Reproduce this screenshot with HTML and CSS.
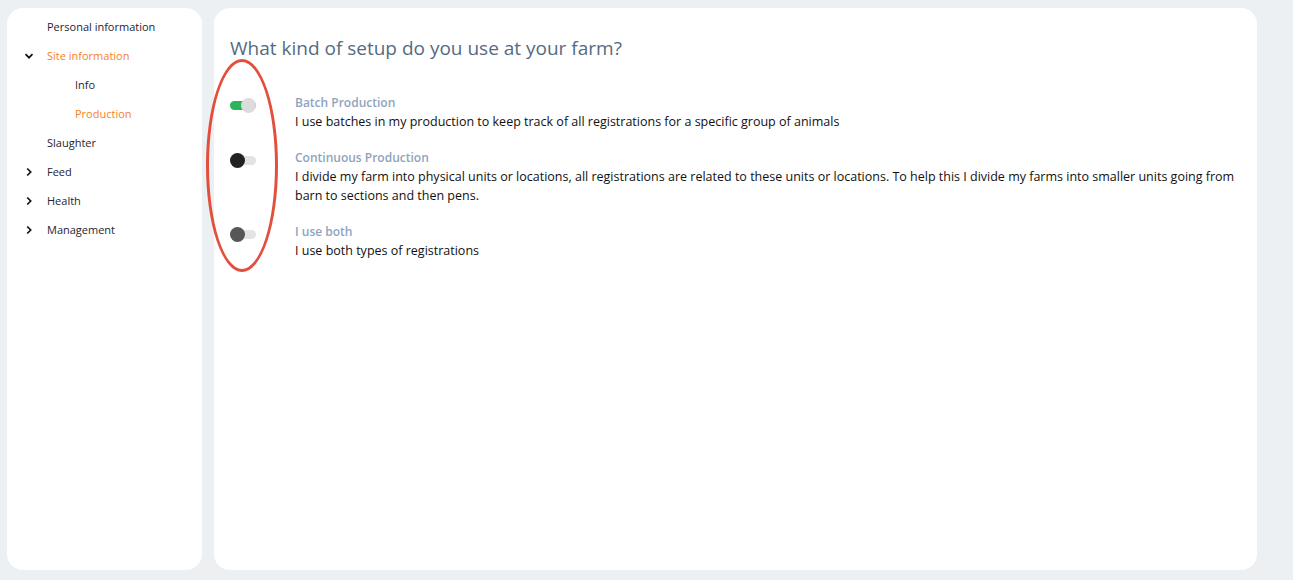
FILE: index.html
```html
<!DOCTYPE html>
<html lang="en">
<head>
<meta charset="utf-8">
<title>Production setup</title>
<link rel="stylesheet" href="styles.css">
</head>
<body>
<div class="layout">
  <nav class="sidebar">
    <ul class="nav">
      <li class="nav-item"><span class="chev"></span><span class="label">Personal information</span></li>
      <li class="nav-item active"><span class="chev"><svg width="10" height="10" viewBox="0 0 10 10"><path d="M1.5 3.2 L5 6.7 L8.5 3.2" fill="none" stroke="#111" stroke-width="1.7"/></svg></span><span class="label">Site information</span></li>
      <li class="nav-item sub"><span class="label">Info</span></li>
      <li class="nav-item sub active"><span class="label">Production</span></li>
      <li class="nav-item"><span class="chev"></span><span class="label">Slaughter</span></li>
      <li class="nav-item"><span class="chev"><svg width="10" height="10" viewBox="0 0 10 10"><path d="M3.2 1.5 L6.7 5 L3.2 8.5" fill="none" stroke="#111" stroke-width="1.7"/></svg></span><span class="label">Feed</span></li>
      <li class="nav-item"><span class="chev"><svg width="10" height="10" viewBox="0 0 10 10"><path d="M3.2 1.5 L6.7 5 L3.2 8.5" fill="none" stroke="#111" stroke-width="1.7"/></svg></span><span class="label">Health</span></li>
      <li class="nav-item"><span class="chev"><svg width="10" height="10" viewBox="0 0 10 10"><path d="M3.2 1.5 L6.7 5 L3.2 8.5" fill="none" stroke="#111" stroke-width="1.7"/></svg></span><span class="label">Management</span></li>
    </ul>
  </nav>
  <main class="content">
    <h1 class="title">What kind of setup do you use at your farm?</h1>
    <div class="options">
      <div class="annotation"></div>
      <div class="option">
        <div class="toggle on"><span class="track"></span><span class="thumb"></span></div>
        <div class="text">
          <div class="opt-title">Batch Production</div>
          <div class="opt-desc">I use batches in my production to keep track of all registrations for a specific group of animals</div>
        </div>
      </div>
      <div class="option">
        <div class="toggle off"><span class="track"></span><span class="thumb"></span></div>
        <div class="text">
          <div class="opt-title">Continuous Production</div>
          <div class="opt-desc">I divide my farm into physical units or locations, all registrations are related to these units or locations. To help this I divide my farms into smaller units going from barn to sections and then pens.</div>
        </div>
      </div>
      <div class="option">
        <div class="toggle off dim"><span class="track"></span><span class="thumb"></span></div>
        <div class="text">
          <div class="opt-title">I use both</div>
          <div class="opt-desc">I use both types of registrations</div>
        </div>
      </div>
    </div>
  </main>
</div>
</body>
</html>
```
FILE: styles.css
```css
* { box-sizing: border-box; }
html, body { margin: 0; padding: 0; }
body {
  background: #edf0f3;
  font-family: "Open Sans", "DejaVu Sans", sans-serif;
  color: #111;
  width: 1293px;
  height: 580px;
  overflow: hidden;
}
.layout {
  display: flex;
  gap: 12px;
  padding: 8px 36px 10px 7px;
  height: 580px;
}
.sidebar {
  width: 195px;
  flex: none;
  background: #fff;
  border-radius: 16px;
  padding: 4px 0 0 0;
}
.nav { list-style: none; margin: 0; padding: 0; }
.nav-item {
  display: flex;
  align-items: center;
  height: 29px;
  font-size: 11px;
  color: #1f2430;
  padding-left: 17px;
}
.nav-item .chev {
  width: 23px;
  flex: none;
  display: flex;
  align-items: center;
}
.nav-item.sub { padding-left: 68px; }
.nav-item.active { color: #f5822a; }
.content {
  flex: 1;
  background: #fff;
  border-radius: 16px;
  padding: 26px 16px 0 16px;
  position: relative;
}
.title {
  margin: 0 0 32px 0;
  font-size: 19px;
  font-weight: 500;
  color: #546b82;
  line-height: 28px;
}
.options { position: relative; }
.option {
  display: flex;
  align-items: flex-start;
  margin-bottom: 18px;
}
.toggle {
  position: relative;
  width: 65px;
  height: 18px;
  flex: none;
}
.toggle .track {
  position: absolute;
  left: 0;
  top: 7px;
  width: 26px;
  height: 9px;
  border-radius: 5px;
  background: #e3e3e3;
}
.toggle .thumb {
  position: absolute;
  top: 4px;
  left: 0;
  width: 15px;
  height: 15px;
  border-radius: 50%;
  background: #222;
}
.toggle.on .track { background: #2db45a; }
.toggle.on .thumb { left: 11px; background: #dcdcdc; }
.toggle.dim .thumb { background: #575757; }
.text { flex: 1; }
.opt-title {
  font-size: 12px;
  font-weight: 600;
  color: #8ea4bd;
  line-height: 18px;
}
.opt-desc {
  font-size: 12.5px;
  line-height: 19px;
  color: #111;
}
.annotation {
  position: absolute;
  left: -24px;
  top: -35px;
  width: 72px;
  height: 213px;
  border: 3px solid #e24f3c;
  border-radius: 50%;
  pointer-events: none;
}
```
